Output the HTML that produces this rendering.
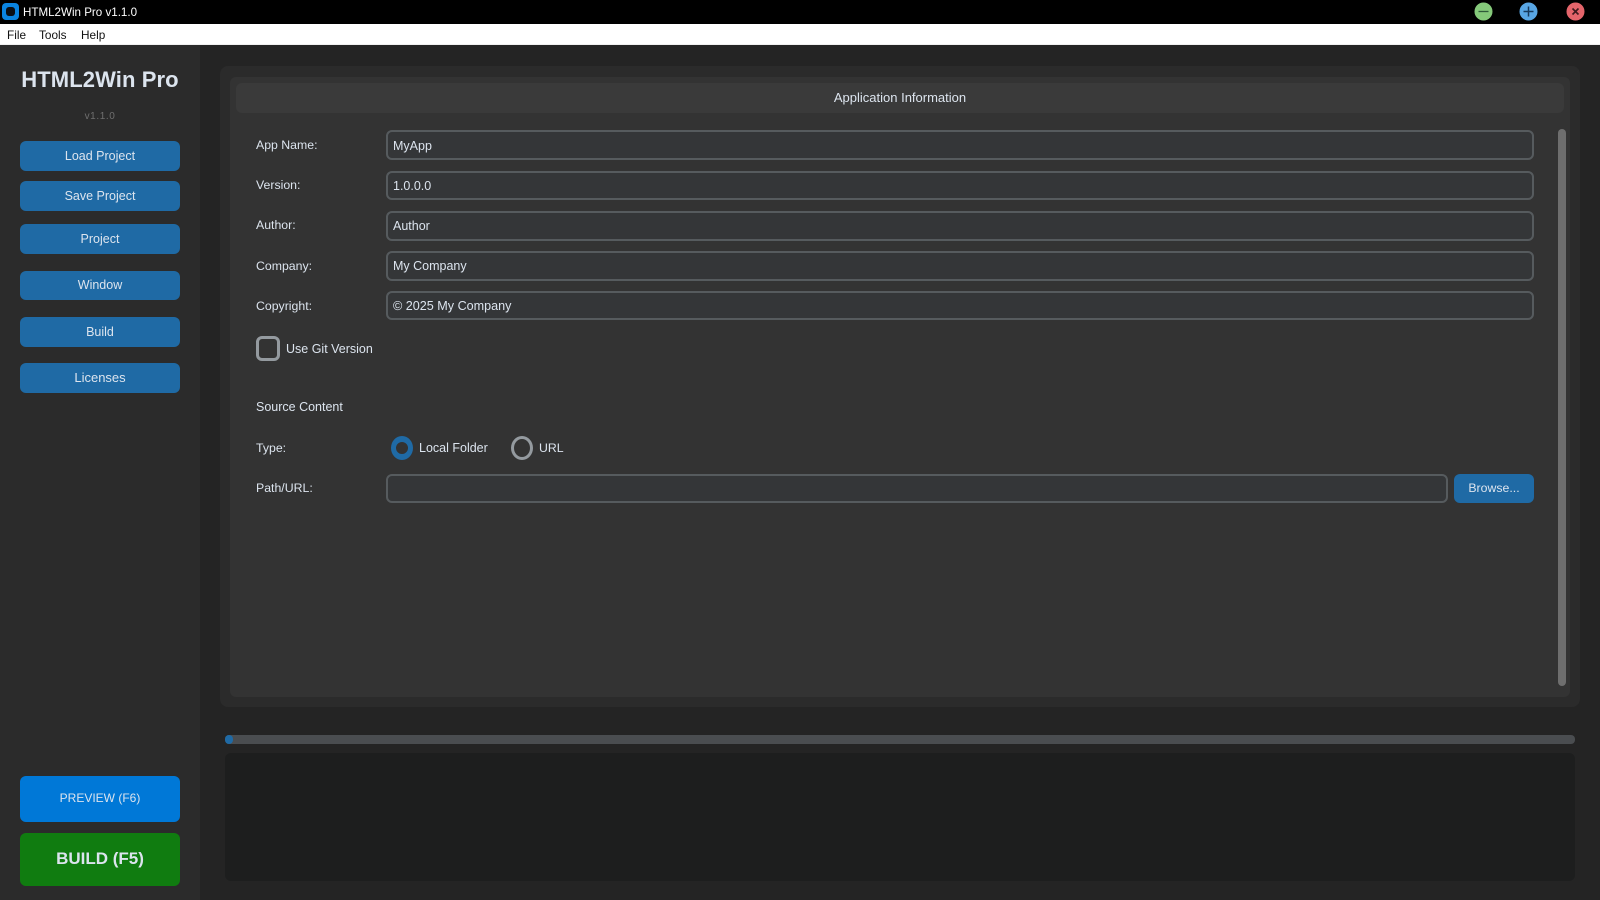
<!DOCTYPE html>
<html><head><meta charset="utf-8"><style>
html,body{margin:0;padding:0;width:1600px;height:900px;overflow:hidden;background:#242424;font-family:"Liberation Sans",sans-serif;font-size:14px;color:#dce4ee}
div,span{position:absolute;box-sizing:border-box;white-space:nowrap}
.t{line-height:18px;height:18px}
.btn{left:20px;width:160px;background:#1f6aa5;border-radius:6px;text-align:center;font-size:12.5px}
.inp{left:386px;width:1148px;background:#343638;border:2px solid #565b5e;border-radius:6px;padding-left:5px;font-size:12.5px}
.lab{left:256px;font-size:12.3px}
</style></head><body>
<div style="left:0;top:0;width:1600px;height:24px;background:#000"></div>
<div style="left:2px;top:3px;width:17px;height:17px;background:#0a84e0;border-radius:4px"></div>
<div style="left:6px;top:7px;width:9px;height:9px;background:#0b0f14;border-radius:3px"></div>
<div class="t" style="left:23px;top:4px;color:#fff;font-size:11.6px">HTML2Win Pro v1.1.0</div>
<svg style="position:absolute;left:1474px;top:2px" width="20" height="20"><circle cx="9.5" cy="9.5" r="9" fill="#85c97a"/><path d="M4.5 9.5h10" stroke="#2f5a3a" stroke-width="1.3"/></svg>
<svg style="position:absolute;left:1519px;top:2px" width="20" height="20"><circle cx="9.5" cy="9.5" r="9" fill="#58a6e4"/><path d="M4.5 9.5h10M9.5 4.5v10" stroke="#173a5c" stroke-width="1.5"/></svg>
<svg style="position:absolute;left:1566px;top:2px" width="20" height="20"><circle cx="9.5" cy="9.5" r="9" fill="#e4656b"/><path d="M6.5 6.5l6 6M12.5 6.5l-6 6" stroke="#3f1a1e" stroke-width="1.6"/></svg>
<div style="left:0;top:24px;width:1600px;height:20px;background:#fff"></div>
<div style="left:0;top:44px;width:1600px;height:1px;background:#f0f0f0"></div>
<div class="t" style="left:7px;top:26px;color:#111;font-size:11.8px">File</div>
<div class="t" style="left:39px;top:26px;color:#111;font-size:11.8px">Tools</div>
<div class="t" style="left:81px;top:26px;color:#111;font-size:11.8px">Help</div>

<div style="left:0;top:45px;width:200px;height:855px;background:#2b2b2b"></div>
<div style="left:0;top:66px;width:200px;height:28px;line-height:28px;text-align:center;font-size:22px;font-weight:bold;letter-spacing:.1px">HTML2Win Pro</div>
<div class="t" style="left:0;top:108px;width:200px;text-align:center;font-size:10px;color:#6f6f6f;letter-spacing:.6px">v1.1.0</div>
<div class="btn" style="top:141px;height:30px;line-height:31px">Load Project</div>
<div class="btn" style="top:181px;height:30px;line-height:31px">Save Project</div>
<div class="btn" style="top:224px;height:30px;line-height:31px">Project</div>
<div class="btn" style="top:271px;height:29px;line-height:28px">Window</div>
<div class="btn" style="top:317px;height:30px;line-height:31px">Build</div>
<div class="btn" style="top:363px;height:30px;line-height:30px;font-size:13px">Licenses</div>
<div class="btn" style="top:776px;height:46px;line-height:44px;background:#0078d7;font-size:12px">PREVIEW (F6)</div>
<div class="btn" style="top:833px;height:53px;line-height:52px;background:#107c10;font-size:17px;font-weight:bold">BUILD (F5)</div>

<div style="left:220px;top:66px;width:1360px;height:641px;background:#2b2b2b;border-radius:8px"></div>
<div style="left:230px;top:77px;width:1340px;height:620px;background:#333;border-radius:6px"></div>
<div style="left:236px;top:83px;width:1328px;height:30px;background:#3a3a3a;border-radius:6px;text-align:center;line-height:30px;font-size:13px">Application Information</div>

<div class="t lab" style="top:136px">App Name:</div>
<div class="inp" style="top:130px;height:30px;line-height:28px">MyApp</div>
<div class="t lab" style="top:176px">Version:</div>
<div class="inp" style="top:171px;height:29px;line-height:27px">1.0.0.0</div>
<div class="t lab" style="top:216px">Author:</div>
<div class="inp" style="top:211px;height:30px;line-height:27px">Author</div>
<div class="t lab" style="top:257px">Company:</div>
<div class="inp" style="top:251px;height:30px;line-height:26px">My Company</div>
<div class="t lab" style="top:297px">Copyright:</div>
<div class="inp" style="top:291px;height:29px;line-height:27px;font-size:12.6px">© 2025 My Company</div>

<div style="left:256px;top:336px;width:24px;height:25px;border:3px solid #949a9f;border-radius:6px"></div>
<div class="t lab" style="left:286px;top:340px;font-size:12.5px">Use Git Version</div>
<div class="t lab" style="top:398px;font-size:12.5px">Source Content</div>
<div class="t lab" style="top:439px">Type:</div>
<div style="left:391px;top:436px;width:22px;height:24px;border-style:solid;border-color:#1f6aa5;border-width:6.5px 5.5px;border-radius:50%"></div>
<div class="t lab" style="left:419px;top:439px;font-size:12.5px">Local Folder</div>
<div style="left:511px;top:436px;width:22px;height:24px;border:3px solid #949a9f;border-radius:50%"></div>
<div class="t lab" style="left:539px;top:439px">URL</div>
<div class="t lab" style="top:479px">Path/URL:</div>
<div class="inp" style="top:474px;width:1062px;height:29px"></div>
<div class="btn" style="left:1454px;top:474px;width:80px;height:29px;line-height:29px;font-size:12.3px">Browse...</div>

<div style="left:1558px;top:129px;width:8px;height:557px;background:#6e6e6e;border-radius:4px"></div>

<div style="left:225px;top:735px;width:1350px;height:9px;background:#4a4d50;border-radius:4px"></div>
<div style="left:225px;top:735px;width:8px;height:9px;background:#1f6aa5;border-radius:4px"></div>
<div style="left:225px;top:753px;width:1350px;height:128px;background:#1d1e1e;border-radius:6px"></div>
</body></html>
